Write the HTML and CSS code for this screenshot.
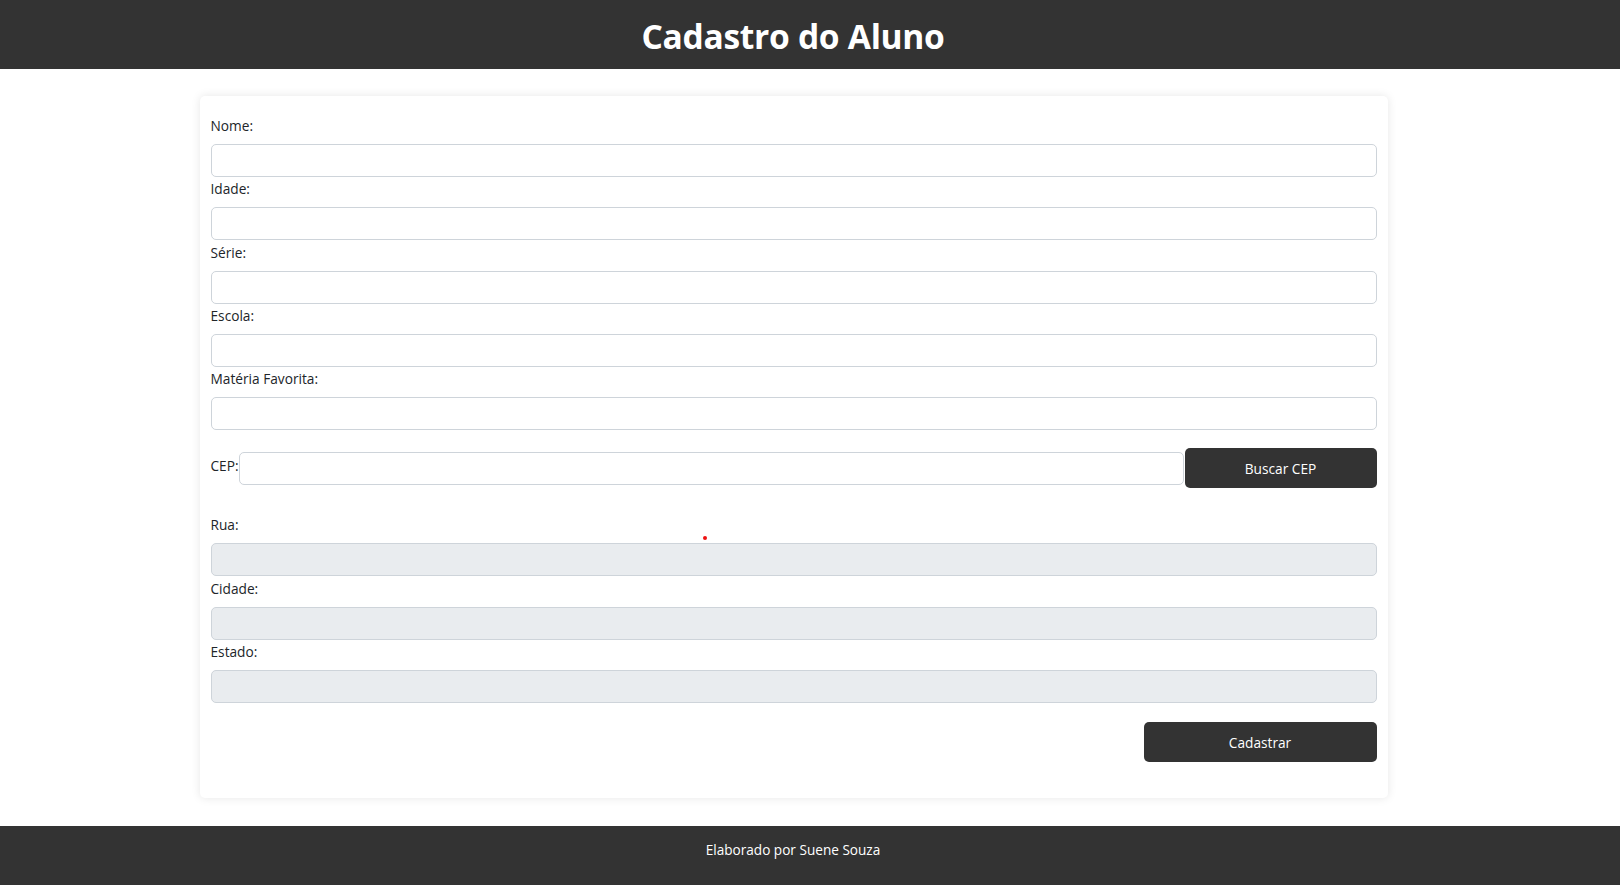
FILE: index.html
```html
<!DOCTYPE html>
<html lang="pt-BR">
<head>
<meta charset="utf-8">
<title>Cadastro do Aluno</title>
<link rel="stylesheet" href="styles.css">
</head>
<body>
<header class="topbar">
  <h1 class="topbar-title">Cadastro do Aluno</h1>
</header>
<main class="page">
  <form class="card">
    <label class="field-label">Nome:</label>
    <input class="field-input" type="text">
    <label class="field-label">Idade:</label>
    <input class="field-input" type="text">
    <label class="field-label">Série:</label>
    <input class="field-input" type="text">
    <label class="field-label">Escola:</label>
    <input class="field-input" type="text">
    <label class="field-label">Matéria Favorita:</label>
    <input class="field-input" type="text">
    <div class="cep-row">
      <label class="field-label cep-label">CEP:</label>
      <input class="field-input cep-input" type="text">
      <button class="btn btn-cep" type="button">Buscar CEP</button>
    </div>
    <label class="field-label">Rua:</label>
    <input class="field-input" type="text" disabled>
    <label class="field-label">Cidade:</label>
    <input class="field-input" type="text" disabled>
    <label class="field-label">Estado:</label>
    <input class="field-input" type="text" disabled>
    <div class="actions">
      <button class="btn btn-submit" type="button">Cadastrar</button>
    </div>
    <span class="dot"></span>
  </form>
</main>
<footer class="bottombar">
  <p class="bottombar-text">Elaborado por Suene Souza</p>
</footer>
</body>
</html>
```
FILE: styles.css
```css
* { box-sizing: border-box; }

body {
  margin: 0;
  font-family: "Open Sans", "Noto Sans", "Liberation Sans", sans-serif;
  color: #212529;
  background: #fff;
}

.topbar {
  height: 69px;
  background: #333333;
  display: flex;
  align-items: center;
  justify-content: center;
  padding: 3px 34px 0 0;
}

.topbar-title {
  margin: 0;
  color: #fff;
  font-size: 33.6px;
  font-weight: 700;
  line-height: 1.2;
  letter-spacing: -0.3px;
}

.page {
  padding: 27px 33px 28px 0;
  display: flex;
  justify-content: center;
}

.card {
  position: relative;
  width: 1188px;
  padding: 20px 11px 36px;
  background: #fff;
  border-radius: 5px;
  box-shadow: 0 0 10px rgba(0, 0, 0, 0.1);
  display: flex;
  flex-direction: column;
}

.field-label {
  display: block;
  font-size: 13.7px;
  line-height: 20px;
  margin-bottom: 8px;
  color: #212529;
}

.field-input {
  display: block;
  width: 100%;
  height: 33px;
  margin: 0 0 2.25px;
  padding: 4px 12px;
  font: inherit;
  font-size: 14px;
  border: 1px solid #ced4da;
  border-radius: 5px;
  background: #fff;
}

.field-input:disabled {
  background: #e9ecef;
}

.cep-row {
  display: flex;
  align-items: center;
  margin: 16px 0 27px;
}

.cep-label {
  margin-bottom: 4px;
  flex: none;
}

.cep-input {
  flex: 1;
  width: auto;
  margin: 0;
}

.btn {
  height: 40px;
  border: none;
  border-radius: 5px;
  background: #333333;
  color: #fff;
  font: inherit;
  font-size: 13.7px;
  cursor: pointer;
}

.btn-cep {
  flex: none;
  width: 192px;
  margin-left: 1px;
}

.actions {
  display: flex;
  justify-content: flex-end;
  margin-top: 17px;
}

.btn-submit {
  width: 233px;
}

.dot {
  position: absolute;
  left: 503px;
  top: 440px;
  width: 4px;
  height: 4px;
  border-radius: 50%;
  background: #ee1111;
}

.bottombar {
  height: 60px;
  background: #333333;
  padding: 13px 34px 0 0;
}

.bottombar-text {
  margin: 0;
  text-align: center;
  color: #fff;
  font-size: 13.6px;
  line-height: 21px;
}
```
